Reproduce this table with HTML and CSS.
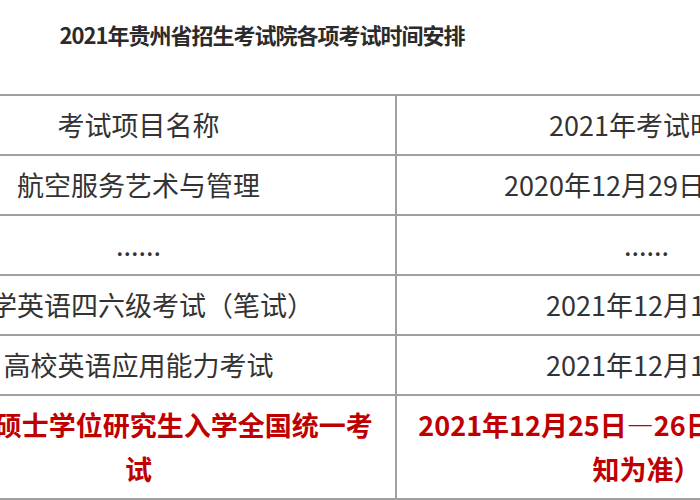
FILE: index.html
```html
<!DOCTYPE html>
<html lang="zh-CN">
<head>
<meta charset="utf-8">
<title>2021年贵州省招生考试院各项考试时间安排</title>
<link rel="stylesheet" href="styles.css">
</head>
<body>
<div class="page">
  <h1 class="title">2021年贵州省招生考试院各项考试时间安排</h1>
  <table class="schedule">
    <colgroup>
      <col class="col-name">
      <col class="col-time">
    </colgroup>
    <tbody>
      <tr>
        <td>考试项目名称</td>
        <td class="time">2021年考试时间</td>
      </tr>
      <tr>
        <td>航空服务艺术与管理</td>
        <td class="time">2020年12月29日—30日</td>
      </tr>
      <tr>
        <td>......</td>
        <td class="time">......</td>
      </tr>
      <tr>
        <td>大学英语四六级考试（笔试）</td>
        <td class="time">2021年12月18日</td>
      </tr>
      <tr>
        <td>高校英语应用能力考试</td>
        <td class="time">2021年12月19日</td>
      </tr>
      <tr class="highlight">
        <td>2022年硕士学位研究生入学全国统一考试</td>
        <td class="time">2021年12月25日—26日（以准考证通知为准）</td>
      </tr>
    </tbody>
  </table>
</div>
</body>
</html>
```

FILE: styles.css
```css
html, body {
  margin: 0;
  padding: 0;
  background: #ffffff;
  overflow: hidden;
}

body {
  width: 700px;
  height: 500px;
  font-family: "Noto Sans CJK SC", "Noto Sans", sans-serif;
  color: #333333;
}

.page {
  margin-left: -120px;
  width: 1016px;
}

.title {
  width: 764px;
  margin: 14px 0 40px 0;
  font-size: 22px;
  letter-spacing: -1px;
  line-height: 40px;
  font-weight: bold;
  text-align: center;
  color: #2b2b2b;
}

.schedule {
  width: 1016px;
  border-collapse: collapse;
  table-layout: fixed;
}

.col-name {
  width: 515px;
}

.col-time {
  width: 501px;
}

.schedule td {
  border: 2px solid #a0a0a0;
  padding: 7px 16px;
  font-size: 27px;
  line-height: 44px;
  text-align: center;
  vertical-align: middle;
}

.schedule td.time {
  padding: 7px 18px;
}

.highlight td {
  color: #c00000;
  font-weight: bold;
}
```
